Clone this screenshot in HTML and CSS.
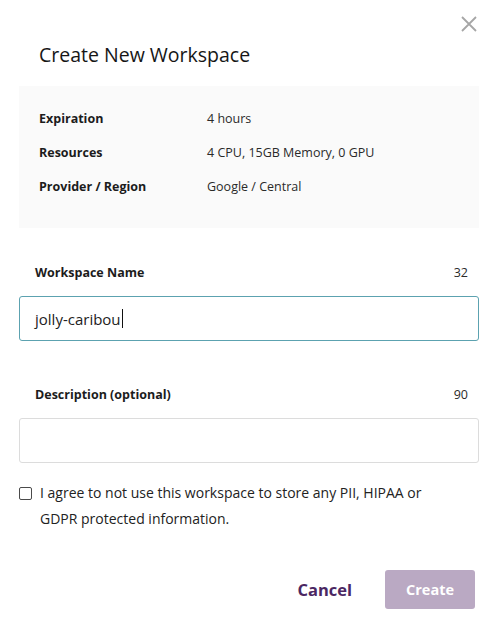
FILE: index.html
```html
<!DOCTYPE html>
<html lang="en">
<head>
<meta charset="utf-8">
<title>Create New Workspace</title>
<link rel="stylesheet" href="styles.css">
</head>
<body>
<div class="modal">
  <button class="close" aria-label="Close">
    <svg width="16" height="16" viewBox="0 0 16 16"><path d="M1 1L15 15M15 1L1 15" stroke="#a6a6a6" stroke-width="1.8" fill="none"/></svg>
  </button>
  <h1 class="title">Create New Workspace</h1>
  <div class="info">
    <div class="info-row"><span class="info-label">Expiration</span><span class="info-value">4 hours</span></div>
    <div class="info-row"><span class="info-label">Resources</span><span class="info-value">4 CPU, 15GB Memory, 0 GPU</span></div>
    <div class="info-row"><span class="info-label">Provider / Region</span><span class="info-value">Google / Central</span></div>
  </div>
  <div class="field-head first"><span class="field-label">Workspace Name</span><span class="counter">32</span></div>
  <div class="input focused"><span class="input-text">jolly-caribou</span><span class="caret"></span></div>
  <div class="field-head second"><span class="field-label">Description (optional)</span><span class="counter">90</span></div>
  <div class="input"></div>
  <label class="agree">
    <span class="checkbox"></span>
    <span class="agree-text">I agree to not use this workspace to store any PII, HIPAA or GDPR protected information.</span>
  </label>
  <div class="actions">
    <button class="btn-cancel">Cancel</button>
    <button class="btn-create">Create</button>
  </div>
</div>
</body>
</html>
```
FILE: styles.css
```css
* { box-sizing: border-box; }
html, body { margin: 0; padding: 0; background: #fff; }
body {
  font-family: "Open Sans", "DejaVu Sans", sans-serif;
  color: #222;
  width: 498px;
  height: 624px;
  overflow: hidden;
}
.modal {
  position: relative;
  padding: 0 19px;
  display: flex;
  flex-direction: column;
}
.close {
  position: absolute;
  top: 16px;
  right: 21px;
  width: 16px;
  height: 16px;
  padding: 0;
  border: 0;
  background: none;
  display: flex;
}
.title {
  margin: 43px 0 0 20px;
  font-size: 19.5px;
  line-height: 24px;
  font-weight: 500;
  color: #161616;
}
.info {
  margin-top: 19px;
  background: #fafafa;
  padding: 15px 20px 25px;
}
.info-row {
  display: flex;
  height: 34px;
  align-items: center;
  font-size: 12.5px;
}
.info-label {
  width: 168px;
  font-weight: 700;
  color: #1c1c1c;
}
.info-value { color: #2a2a2a; }
.field-head {
  display: flex;
  justify-content: space-between;
  align-items: center;
  height: 20px;
  padding: 0 11px 0 16px;
}
.field-head.first { margin-top: 34px; }
.field-head.second { margin-top: 43px; }
.field-label {
  font-size: 12.5px;
  font-weight: 700;
  color: #1c1c1c;
}
.counter {
  font-size: 12.5px;
  color: #2a2a2a;
}
.input {
  margin-top: 14px;
  height: 45px;
  border: 1px solid #dcdcdc;
  border-radius: 3px;
  padding: 0 15px;
  display: flex;
  align-items: center;
  font-size: 15px;
  color: #222;
}
.input.focused { border-color: #5ca2b0; }
.caret {
  width: 1px;
  height: 19px;
  background: #111;
  margin-left: 1px;
}
.agree {
  margin-top: 17px;
  display: flex;
  align-items: flex-start;
  gap: 8px;
  font-size: 14px;
  line-height: 26px;
  color: #222;
}
.checkbox {
  flex: none;
  width: 13px;
  height: 13px;
  margin-top: 7px;
  border: 1px solid #4a4a4a;
  border-radius: 2px;
  background: #fff;
}
.agree-text { width: 420px; }
.actions {
  margin-top: 38px;
  display: flex;
  justify-content: flex-end;
  align-items: center;
  padding-right: 4px;
}
.btn-cancel {
  border: 0;
  background: none;
  font-family: inherit;
  font-size: 16.5px;
  font-weight: 700;
  color: #4b2762;
  padding: 0;
  margin-right: 33px;
}
.btn-create {
  width: 90px;
  height: 39px;
  border: 0;
  border-radius: 3px;
  background: #baa9c3;
  color: #fff;
  font-family: inherit;
  font-size: 14.5px;
  font-weight: 700;
}
```
